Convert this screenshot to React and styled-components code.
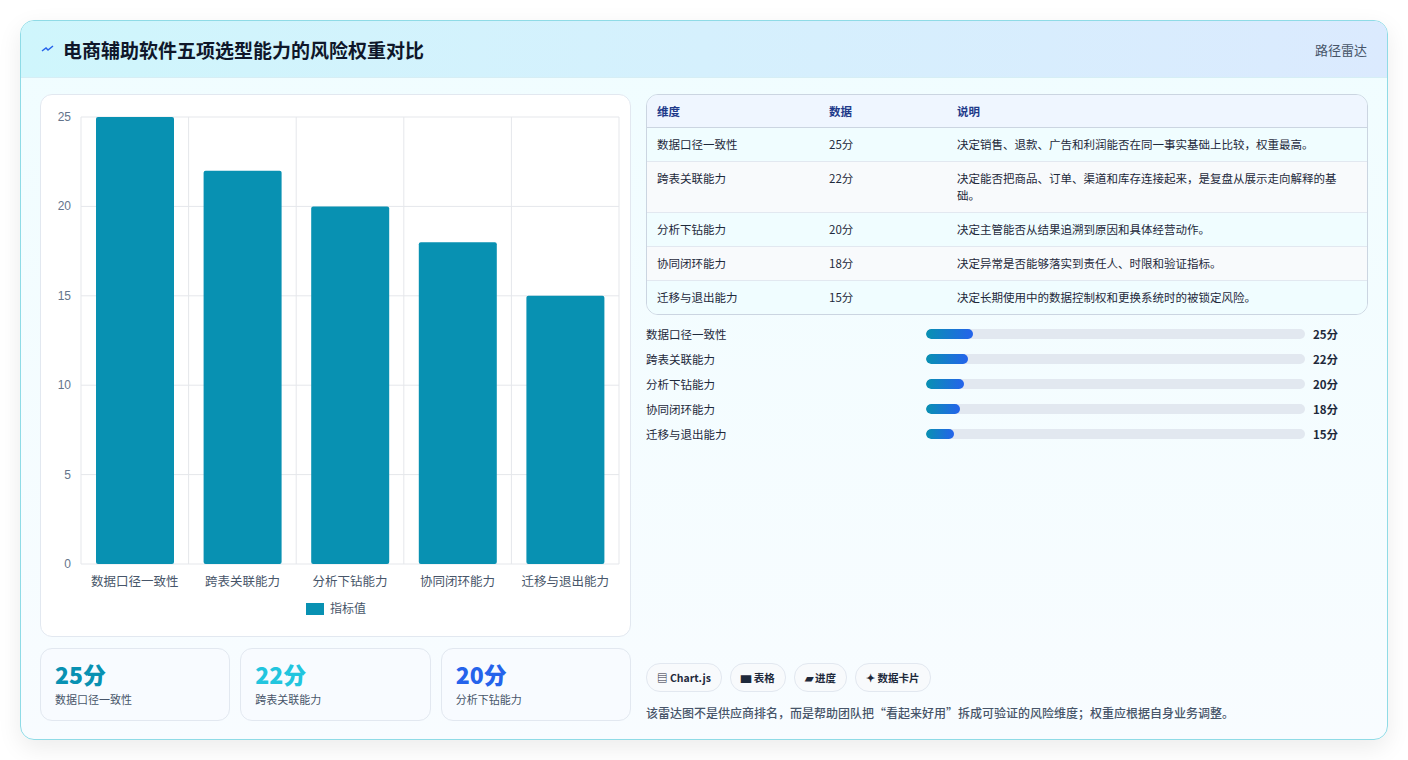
import React from "react";
import styled, { createGlobalStyle } from "styled-components";

const G = createGlobalStyle`
  html,body{margin:0;padding:0;background:#f1f5f9;}
  body{font-family:"Noto Sans CJK SC","Noto Sans",sans-serif;}
`;
const data = [
  ["数据口径一致性", 25, "决定销售、退款、广告和利润能否在同一事实基础上比较，权重最高。"],
  ["跨表关联能力", 22, "决定能否把商品、订单、渠道和库存连接起来，是复盘从展示走向解释的基础。"],
  ["分析下钻能力", 20, "决定主管能否从结果追溯到原因和具体经营动作。"],
  ["协同闭环能力", 18, "决定异常是否能够落实到责任人、时限和验证指标。"],
  ["迁移与退出能力", 15, "决定长期使用中的数据控制权和更换系统时的被锁定风险。"],
];
const Page = styled.div`padding:20px;background:#fff;height:760px;box-sizing:border-box;`;
const Card = styled.div`height:720px;box-sizing:border-box;border:1px solid #8fdbe6;border-radius:14px;overflow:hidden;
  background:linear-gradient(180deg,#f0fdff,#f8fcff);box-shadow:0 8px 24px rgba(0,0,0,.08);display:flex;flex-direction:column;`;
const Header = styled.div`height:56px;flex:none;display:flex;align-items:center;justify-content:space-between;padding:0 20px;
  background:linear-gradient(90deg,#cff6fc,#dbeafe);border-bottom:1px solid #d6eef5;`;
const Title = styled.h1`margin:0;font-size:19px;font-weight:700;color:#0f172a;display:flex;align-items:center;gap:8px;`;
const Tag = styled.span`font-size:13px;color:#475569;`;
const Body = styled.div`flex:1;display:grid;grid-template-columns:591px 1fr;gap:15px;padding:16px 19px 18px 19px;`;
const Left = styled.div`display:flex;flex-direction:column;gap:11px;`;
const ChartBox = styled.div`height:543px;box-sizing:border-box;background:#fff;border:1px solid #e2e8f0;border-radius:12px;position:relative;`;
const Stats = styled.div`display:grid;grid-template-columns:repeat(3,1fr);gap:10px;`;
const Stat = styled.div`height:73px;box-sizing:border-box;border:1px solid #e2e8f0;border-radius:12px;background:#f8fbff;padding:10px 14px;`;
const Big = styled.div`font-size:23px;font-weight:800;color:${p=>p.c};line-height:30px;`;
const Small = styled.div`font-size:11px;color:#475569;margin-top:2px;`;
const Right = styled.div`display:flex;flex-direction:column;`;
const Table = styled.table`width:100%;border-collapse:separate;border-spacing:0;border:1px solid #cbd5e1;border-radius:12px;overflow:hidden;font-size:11.5px;color:#1e293b;`;
const Th = styled.th`text-align:left;font-weight:700;color:#1e3a8a;background:#eff6ff;padding:0 10px;height:32px;border-bottom:1px solid #cbd5e1;`;
const Td = styled.td`padding:8px 10px;border-top:${p=>p.first?"none":"1px solid #e2e8f0"};background:${p=>p.odd?"#f8fafc":"#f0fdff"};vertical-align:top;line-height:17px;`;
const Bars = styled.div`display:flex;flex-direction:column;gap:7px;margin-top:10px;`;
const BarRow = styled.div`display:grid;grid-template-columns:272px 379px 1fr;gap:8px;align-items:center;font-size:11.5px;color:#1e293b;height:18px;`;
const Track = styled.div`height:10px;border-radius:5px;background:#e2e8f0;overflow:hidden;`;
const Fill = styled.div`height:100%;border-radius:5px;background:linear-gradient(90deg,#0891b2,#2563eb);`;
const Val = styled.span`font-weight:700;`;
const Spacer = styled.div`flex:1;`;
const Chips = styled.div`display:flex;gap:8px;`;
const Chip = styled.span`font-size:10.5px;font-weight:700;color:#1e293b;padding:6px 10px;border:1px solid #e2e8f0;border-radius:14px;background:#f8fafc;`;
const Note = styled.p`margin:12px 0 0;font-size:12px;color:#475569;font-weight:500;`;

function Chart(){
  const L=40,R=578,T=22,B=469,W=R-L,H=B-T,step=W/5;
  return <svg width="589" height="541" style={{display:"block"}}>
    {[0,5,10,15,20,25].map(v=>{const y=B-v/25*H;return <g key={v}>
      <line x1={L} x2={R} y1={y} y2={y} stroke="#e5e7eb"/>
      <text x={L-10} y={y+4} textAnchor="end" fontSize="12" fill="#64748b" fontFamily="Liberation Sans">{v}</text></g>})}
    {[0,1,2,3,4,5].map(i=><line key={i} x1={L+i*step} x2={L+i*step} y1={T} y2={B+ (i===0?0:0)} stroke="#e5e7eb"/>)}
    {data.map((d,i)=>{const h=d[1]/25*H;const x=L+i*step+15;return <g key={i}>
      <rect x={x} y={B-h} width={78} height={h} rx="2" fill="#0891b2"/>
      <text x={L+i*step+step/2} y={B+22} textAnchor="middle" fontSize="12.5" fill="#475569">{d[0]}</text></g>})}
    <rect x="265" y="508" width="18" height="12" fill="#0891b2"/>
    <text x="289" y="518" fontSize="12" fill="#475569">指标值</text>
  </svg>;
}

export default function App(){
  return <Page><G/><Card>
    <Header><Title><svg width="14" height="10" viewBox="0 0 14 10"><path d="M1 7 L5 4 L7 6 L12 2" stroke="#2563eb" strokeWidth="1.5" fill="none"/></svg>电商辅助软件五项选型能力的风险权重对比</Title><Tag>路径雷达</Tag></Header>
    <Body>
      <Left>
        <ChartBox><Chart/></ChartBox>
        <Stats>
          <Stat><Big c="#0891b2">25分</Big><Small>数据口径一致性</Small></Stat>
          <Stat><Big c="#22c5de">22分</Big><Small>跨表关联能力</Small></Stat>
          <Stat><Big c="#2563eb">20分</Big><Small>分析下钻能力</Small></Stat>
        </Stats>
      </Left>
      <Right>
        <Table><thead><tr><Th style={{width:152}}>维度</Th><Th style={{width:108}}>数据</Th><Th>说明</Th></tr></thead>
          <tbody>{data.map((d,i)=><tr key={i}><Td first={i===0} odd={i%2===1}>{d[0]}</Td><Td first={i===0} odd={i%2===1}>{d[1]}分</Td><Td first={i===0} odd={i%2===1}>{d[2]}</Td></tr>)}</tbody>
        </Table>
        <Bars>{data.map((d,i)=><BarRow key={i}><span>{d[0]}</span><Track><Fill style={{width:`${d[1]/200*100}%`}}/></Track><Val>{d[1]}分</Val></BarRow>)}</Bars>
        <Spacer/>
        <Chips><Chip>▤ Chart.js</Chip><Chip>▆ 表格</Chip><Chip>▰ 进度</Chip><Chip>✦ 数据卡片</Chip></Chips>
        <Note>该雷达图不是供应商排名，而是帮助团队把“看起来好用”拆成可验证的风险维度；权重应根据自身业务调整。</Note>
      </Right>
    </Body>
  </Card></Page>;
}
